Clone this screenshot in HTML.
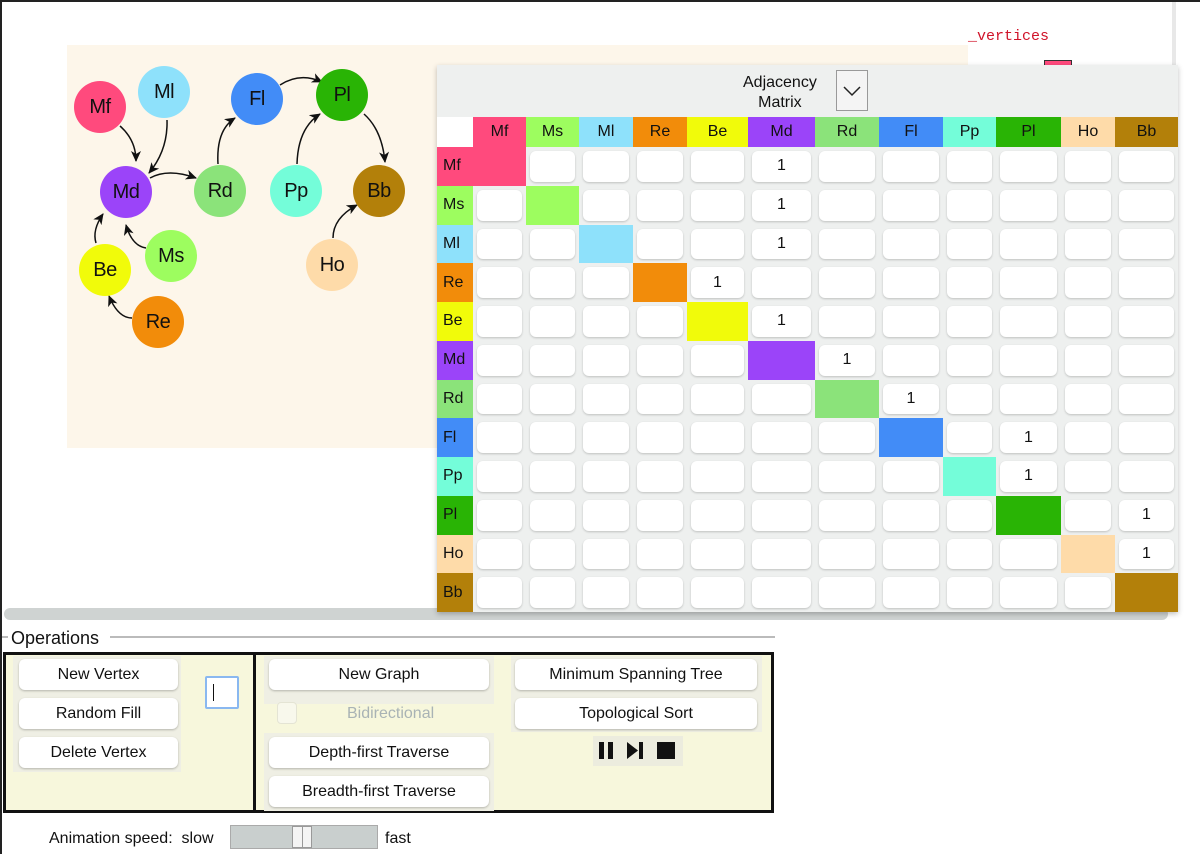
<!DOCTYPE html>
<html><head><meta charset="utf-8"><style>
*{box-sizing:border-box;margin:0;padding:0}
body{width:1200px;height:854px;position:relative;overflow:hidden;background:#fff;font-family:"Liberation Sans",sans-serif;color:#111}
.frame{position:absolute;left:0;top:0;width:1200px;height:854px;border-top:2px solid #222;border-left:2px solid #222}
.graph{position:absolute;left:67px;top:45px;width:901px;height:403px;background:#fdf6ea}
.vert{position:absolute;width:52px;height:52px;border-radius:50%;display:flex;align-items:center;justify-content:center;font-size:20px;letter-spacing:-0.5px}
.mx{position:absolute;left:437px;top:65px;width:741px;height:547px;background:#eef0ef;box-shadow:0 2px 5px rgba(0,0,0,.25)}
.grid{position:absolute;left:0;top:52px;display:grid;grid-template-columns:36px 53px 53px 54px 54px 61px 67px 64px 64px 53px 65px 54px 63px;grid-template-rows:30px repeat(12,38.75px)}
.grid>div{display:flex;align-items:center;justify-content:center;font-size:16px}
.c{position:relative}
.c span{position:absolute;left:4px;right:4px;top:4px;bottom:4px;background:#fff;border-radius:6px;box-shadow:0 1px 2px rgba(0,0,0,.2);display:flex;align-items:center;justify-content:center;font-size:16px}
.l{justify-content:flex-start!important;padding-left:6px}
.btn{position:absolute;height:31px;background:#fff;border-radius:6px;box-shadow:0 1px 2px rgba(0,0,0,.25);display:flex;align-items:center;justify-content:center;font-size:16px}
.btnbg{position:absolute;background:#efefe4}
</style></head><body>
<div class="frame"></div>
<div style="position:absolute;left:1172px;top:2px;width:4px;height:610px;background:#e8e8e8"></div>
<div class="graph"></div>
<div style="position:absolute;left:968px;top:28px;font-family:'Liberation Mono',monospace;color:#d0142a;font-size:15px">_vertices</div>
<div style="position:absolute;left:1044px;top:60px;width:28px;height:10px;background:#ff4a7d;border:1px solid #333"></div>
<svg style="position:absolute;left:0;top:0" width="440" height="360">
<defs><marker id="a" markerWidth="12" markerHeight="12" refX="10" refY="5" orient="auto" markerUnits="userSpaceOnUse"><path d="M0,0 L11,5 L0,10 L3,5z" fill="#111"/></marker></defs>
<g fill="none" stroke="#111" stroke-width="1.5" marker-end="url(#a)">
<path d="M120,126 Q136,140 136,161"/>
<path d="M167,120 Q168,150 149,173"/>
<path d="M150,178 Q168,168 196,178"/>
<path d="M218,164 Q216,130 235,118"/>
<path d="M280,85 Q300,72 322,82"/>
<path d="M297,164 Q298,128 320,114"/>
<path d="M364,114 Q382,130 385,162"/>
<path d="M333,238 Q333,218 357,205"/>
<path d="M146,248 Q132,246 126,225"/>
<path d="M96,243 Q92,230 103,214"/>
<path d="M132,318 Q118,318 109,296"/>
</g></svg>
<div class="vert" style="left:74px;top:81px;background:#ff4a7d">Mf</div>
<div class="vert" style="left:138px;top:66px;background:#8ee1fb">Ml</div>
<div class="vert" style="left:100px;top:166px;background:#9b44f9">Md</div>
<div class="vert" style="left:194px;top:165px;background:#8be37a">Rd</div>
<div class="vert" style="left:231px;top:73px;background:#428cf7">Fl</div>
<div class="vert" style="left:316px;top:69px;background:#29b405">Pl</div>
<div class="vert" style="left:270px;top:165px;background:#74fdd9">Pp</div>
<div class="vert" style="left:353px;top:165px;background:#b3800a">Bb</div>
<div class="vert" style="left:306px;top:239px;background:#fedba9">Ho</div>
<div class="vert" style="left:145px;top:230px;background:#9dfd5f">Ms</div>
<div class="vert" style="left:79px;top:244px;background:#f1fb0a">Be</div>
<div class="vert" style="left:132px;top:296px;background:#f28c0a">Re</div>

<div class="mx">
<div style="position:absolute;left:306px;top:8px;font-size:16px;text-align:center;line-height:20px">Adjacency<br>Matrix</div>
<div style="position:absolute;left:399px;top:5px;width:32px;height:41px;border:1px solid #999;background:#f4f4f4"><svg width="30" height="39"><path d="M7,16 L15,24 L23,16" fill="none" stroke="#222" stroke-width="1.5"/></svg></div>
<div class="grid">
<div style="background:#fff"></div><div style="background:#ff4a7d">Mf</div><div style="background:#9dfd5f">Ms</div><div style="background:#8ee1fb">Ml</div><div style="background:#f28c0a">Re</div><div style="background:#f1fb0a">Be</div><div style="background:#9b44f9">Md</div><div style="background:#8be37a">Rd</div><div style="background:#428cf7">Fl</div><div style="background:#74fdd9">Pp</div><div style="background:#29b405">Pl</div><div style="background:#fedba9">Ho</div><div style="background:#b3800a">Bb</div>
<div class="l" style="background:#ff4a7d">Mf</div><div style="background:#ff4a7d"></div><div class="c"><span></span></div><div class="c"><span></span></div><div class="c"><span></span></div><div class="c"><span></span></div><div class="c"><span>1</span></div><div class="c"><span></span></div><div class="c"><span></span></div><div class="c"><span></span></div><div class="c"><span></span></div><div class="c"><span></span></div><div class="c"><span></span></div>
<div class="l" style="background:#9dfd5f">Ms</div><div class="c"><span></span></div><div style="background:#9dfd5f"></div><div class="c"><span></span></div><div class="c"><span></span></div><div class="c"><span></span></div><div class="c"><span>1</span></div><div class="c"><span></span></div><div class="c"><span></span></div><div class="c"><span></span></div><div class="c"><span></span></div><div class="c"><span></span></div><div class="c"><span></span></div>
<div class="l" style="background:#8ee1fb">Ml</div><div class="c"><span></span></div><div class="c"><span></span></div><div style="background:#8ee1fb"></div><div class="c"><span></span></div><div class="c"><span></span></div><div class="c"><span>1</span></div><div class="c"><span></span></div><div class="c"><span></span></div><div class="c"><span></span></div><div class="c"><span></span></div><div class="c"><span></span></div><div class="c"><span></span></div>
<div class="l" style="background:#f28c0a">Re</div><div class="c"><span></span></div><div class="c"><span></span></div><div class="c"><span></span></div><div style="background:#f28c0a"></div><div class="c"><span>1</span></div><div class="c"><span></span></div><div class="c"><span></span></div><div class="c"><span></span></div><div class="c"><span></span></div><div class="c"><span></span></div><div class="c"><span></span></div><div class="c"><span></span></div>
<div class="l" style="background:#f1fb0a">Be</div><div class="c"><span></span></div><div class="c"><span></span></div><div class="c"><span></span></div><div class="c"><span></span></div><div style="background:#f1fb0a"></div><div class="c"><span>1</span></div><div class="c"><span></span></div><div class="c"><span></span></div><div class="c"><span></span></div><div class="c"><span></span></div><div class="c"><span></span></div><div class="c"><span></span></div>
<div class="l" style="background:#9b44f9">Md</div><div class="c"><span></span></div><div class="c"><span></span></div><div class="c"><span></span></div><div class="c"><span></span></div><div class="c"><span></span></div><div style="background:#9b44f9"></div><div class="c"><span>1</span></div><div class="c"><span></span></div><div class="c"><span></span></div><div class="c"><span></span></div><div class="c"><span></span></div><div class="c"><span></span></div>
<div class="l" style="background:#8be37a">Rd</div><div class="c"><span></span></div><div class="c"><span></span></div><div class="c"><span></span></div><div class="c"><span></span></div><div class="c"><span></span></div><div class="c"><span></span></div><div style="background:#8be37a"></div><div class="c"><span>1</span></div><div class="c"><span></span></div><div class="c"><span></span></div><div class="c"><span></span></div><div class="c"><span></span></div>
<div class="l" style="background:#428cf7">Fl</div><div class="c"><span></span></div><div class="c"><span></span></div><div class="c"><span></span></div><div class="c"><span></span></div><div class="c"><span></span></div><div class="c"><span></span></div><div class="c"><span></span></div><div style="background:#428cf7"></div><div class="c"><span></span></div><div class="c"><span>1</span></div><div class="c"><span></span></div><div class="c"><span></span></div>
<div class="l" style="background:#74fdd9">Pp</div><div class="c"><span></span></div><div class="c"><span></span></div><div class="c"><span></span></div><div class="c"><span></span></div><div class="c"><span></span></div><div class="c"><span></span></div><div class="c"><span></span></div><div class="c"><span></span></div><div style="background:#74fdd9"></div><div class="c"><span>1</span></div><div class="c"><span></span></div><div class="c"><span></span></div>
<div class="l" style="background:#29b405">Pl</div><div class="c"><span></span></div><div class="c"><span></span></div><div class="c"><span></span></div><div class="c"><span></span></div><div class="c"><span></span></div><div class="c"><span></span></div><div class="c"><span></span></div><div class="c"><span></span></div><div class="c"><span></span></div><div style="background:#29b405"></div><div class="c"><span></span></div><div class="c"><span>1</span></div>
<div class="l" style="background:#fedba9">Ho</div><div class="c"><span></span></div><div class="c"><span></span></div><div class="c"><span></span></div><div class="c"><span></span></div><div class="c"><span></span></div><div class="c"><span></span></div><div class="c"><span></span></div><div class="c"><span></span></div><div class="c"><span></span></div><div class="c"><span></span></div><div style="background:#fedba9"></div><div class="c"><span>1</span></div>
<div class="l" style="background:#b3800a">Bb</div><div class="c"><span></span></div><div class="c"><span></span></div><div class="c"><span></span></div><div class="c"><span></span></div><div class="c"><span></span></div><div class="c"><span></span></div><div class="c"><span></span></div><div class="c"><span></span></div><div class="c"><span></span></div><div class="c"><span></span></div><div class="c"><span></span></div><div style="background:#b3800a"></div>
</div></div>

<div style="position:absolute;left:4px;top:608px;width:1164px;height:12px;border-radius:6px;background:#cfd3d2;z-index:-1"></div>
<div style="position:absolute;left:110px;top:636px;width:665px;height:2px;background:#bbb"></div>
<div style="position:absolute;left:2px;top:636px;width:6px;height:2px;background:#bbb"></div>
<div style="position:absolute;left:11px;top:628px;font-size:18px">Operations</div>
<div style="position:absolute;left:3px;top:652px;width:771px;height:161px;border:3px solid #111;background:#f7f7dc"></div>
<div style="position:absolute;left:253px;top:652px;width:3px;height:161px;background:#111"></div>
<div class="btnbg" style="left:13px;top:656px;width:168px;height:116px"></div>
<div class="btn" style="left:19px;top:659px;width:159px">New Vertex</div>
<div class="btn" style="left:19px;top:698px;width:159px">Random Fill</div>
<div class="btn" style="left:19px;top:737px;width:159px">Delete Vertex</div>
<div style="position:absolute;left:205px;top:676px;width:34px;height:33px;border:2px solid #8ab8f0;background:#fff;border-radius:2px"><div style="position:absolute;left:6px;top:6px;width:1px;height:17px;background:#111"></div></div>
<div class="btnbg" style="left:264px;top:656px;width:230px;height:48px"></div>
<div class="btnbg" style="left:264px;top:733px;width:230px;height:78px"></div>
<div class="btn" style="left:269px;top:659px;width:220px">New Graph</div>
<div style="position:absolute;left:277px;top:702px;width:20px;height:22px;border:1px solid #e4e4d4;border-radius:4px;background:#f8f8ec"></div>
<div style="position:absolute;left:347px;top:705px;font-size:16px;color:#a9b3b5">Bidirectional</div>
<div class="btn" style="left:269px;top:737px;width:220px">Depth-first Traverse</div>
<div class="btn" style="left:269px;top:776px;width:220px">Breadth-first Traverse</div>
<div class="btnbg" style="left:511px;top:656px;width:251px;height:76px"></div>
<div class="btn" style="left:515px;top:659px;width:242px">Minimum Spanning Tree</div>
<div class="btn" style="left:515px;top:698px;width:242px">Topological Sort</div>
<div style="position:absolute;left:593px;top:736px;width:90px;height:30px;background:#ececde"></div>
<div style="position:absolute;left:599px;top:742px;width:5px;height:17px;background:#111"></div>
<div style="position:absolute;left:608px;top:742px;width:5px;height:17px;background:#111"></div>
<svg style="position:absolute;left:626px;top:741px" width="20" height="19"><path d="M1,1 L12,9.5 L1,18z" fill="#111"/><rect x="13" y="1" width="4" height="17" fill="#111"/></svg>
<div style="position:absolute;left:657px;top:742px;width:18px;height:17px;background:#111"></div>
<div style="position:absolute;left:49px;top:830px;font-size:16px">Animation speed:&nbsp; slow</div>
<div style="position:absolute;left:230px;top:825px;width:148px;height:24px;background:#c9cfce;border:1px solid #aaa"></div>
<div style="position:absolute;left:292px;top:826px;width:20px;height:22px;background:#f4f4f4;border:1px solid #999"><div style="position:absolute;left:9px;top:0;width:1px;height:20px;background:#999"></div></div>
<div style="position:absolute;left:385px;top:830px;font-size:16px">fast</div>
</body></html>
